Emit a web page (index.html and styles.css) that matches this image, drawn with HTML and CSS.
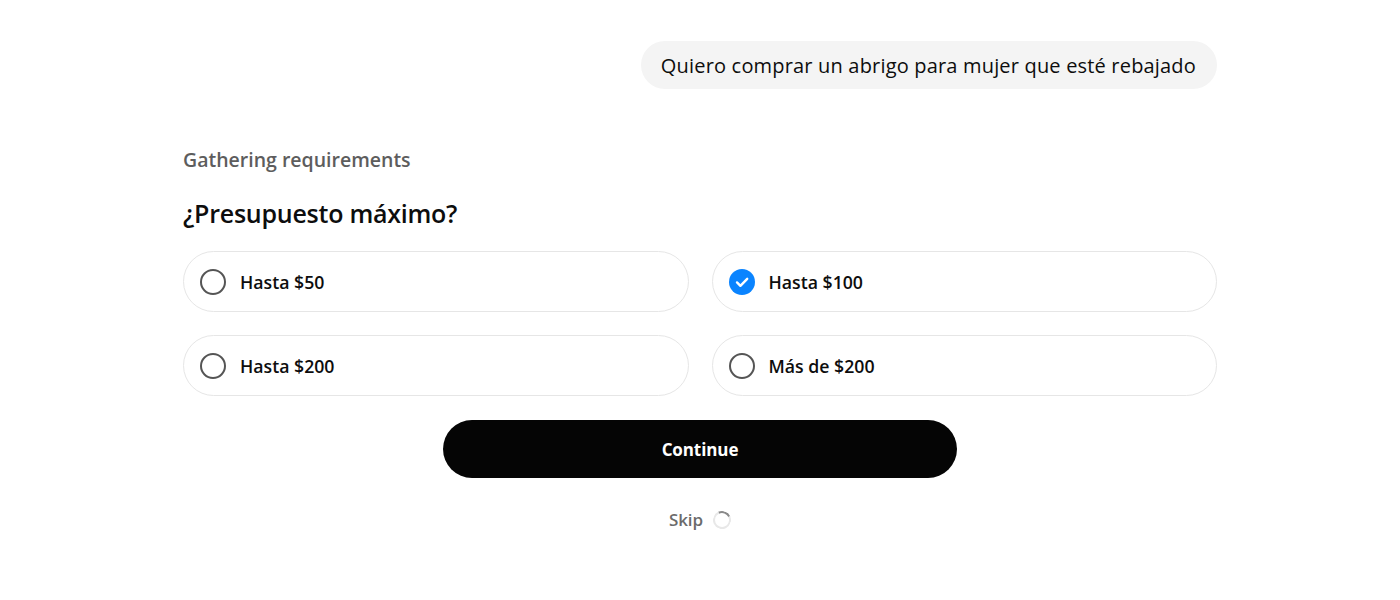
FILE: index.html
```html
<!DOCTYPE html>
<html lang="es">
<head>
<meta charset="utf-8">
<title>Presupuesto</title>
<link rel="stylesheet" href="styles.css">
</head>
<body>
<main class="thread">
  <div class="user-row">
    <div class="bubble">Quiero comprar un abrigo para mujer que esté rebajado</div>
  </div>
  <section class="req">
    <div class="status">Gathering requirements</div>
    <h2 class="question">¿Presupuesto máximo?</h2>
    <div class="options">
      <button class="option">
        <span class="radio"></span>
        <span class="label">Hasta $50</span>
      </button>
      <button class="option selected">
        <span class="radio checked">
          <svg viewBox="0 0 26 26" width="26" height="26"><circle cx="13" cy="13" r="13" fill="#0a84ff"/><path d="M8 13.4l3.4 3.4L18.2 9.8" fill="none" stroke="#fff" stroke-width="2.4" stroke-linecap="round" stroke-linejoin="round"/></svg>
        </span>
        <span class="label">Hasta $100</span>
      </button>
      <button class="option">
        <span class="radio"></span>
        <span class="label">Hasta $200</span>
      </button>
      <button class="option">
        <span class="radio"></span>
        <span class="label">Más de $200</span>
      </button>
    </div>
    <div class="actions">
      <button class="continue">Continue</button>
      <div class="skip">
        <span>Skip</span>
        <span class="spinner"></span>
      </div>
    </div>
  </section>
</main>
</body>
</html>
```
FILE: styles.css
```css
* { box-sizing: border-box; }
html, body { margin: 0; padding: 0; background: #fff; }
body {
  font-family: "Open Sans", "Noto Sans", sans-serif;
  color: #0d0d0d;
}
.thread {
  width: 1034px;
  margin: 0 auto;
  padding-top: 41px;
}
.user-row {
  display: flex;
  justify-content: flex-end;
}
.bubble {
  background: #f4f4f4;
  border-radius: 24px;
  height: 48px;
  padding: 0 21px 0 20px;
  display: flex;
  align-items: center;
  font-size: 20px;
  letter-spacing: 0.18px;
}
.req {
  padding-top: 59px;
}
.status {
  font-size: 19.5px;
  font-weight: 600;
  color: #5d5d5d;
  line-height: 24px;
}
.question {
  margin: 25px 0 0;
  font-size: 25px;
  font-weight: 600;
  line-height: 32px;
  letter-spacing: -0.25px;
}
.options {
  margin-top: 22px;
  display: grid;
  grid-template-columns: 1fr 1fr;
  column-gap: 23px;
  row-gap: 23px;
}
.option {
  height: 61px;
  border: 1px solid #e6e6e6;
  border-radius: 31px;
  background: #fff;
  display: flex;
  align-items: center;
  gap: 14px;
  padding: 0 0 0 16px;
  font-family: inherit;
  color: #0d0d0d;
  cursor: pointer;
}
.radio {
  width: 26px;
  height: 26px;
  border-radius: 50%;
  border: 2px solid #555;
  flex: none;
}
.radio.checked {
  border: none;
}
.radio.checked svg { display: block; }
.label {
  font-size: 17.7px;
  font-weight: 600;
}
.actions {
  display: flex;
  flex-direction: column;
  align-items: center;
  margin-top: 24px;
}
.continue {
  width: 514px;
  height: 58px;
  border: none;
  border-radius: 29px;
  background: #050505;
  color: #fff;
  font-family: inherit;
  font-size: 17px;
  font-weight: 700;
  letter-spacing: -0.1px;
  cursor: pointer;
}
.skip {
  margin-top: 30px;
  display: flex;
  align-items: center;
  gap: 10px;
  font-size: 17px;
  font-weight: 600;
  color: #6b6b6b;
  letter-spacing: -0.1px;
}
.spinner {
  width: 18px;
  height: 18px;
  border-radius: 50%;
  border: 2px solid #e8e8e8;
  border-top-color: #8a8a8a;
  transform: rotate(20deg);
}
```
